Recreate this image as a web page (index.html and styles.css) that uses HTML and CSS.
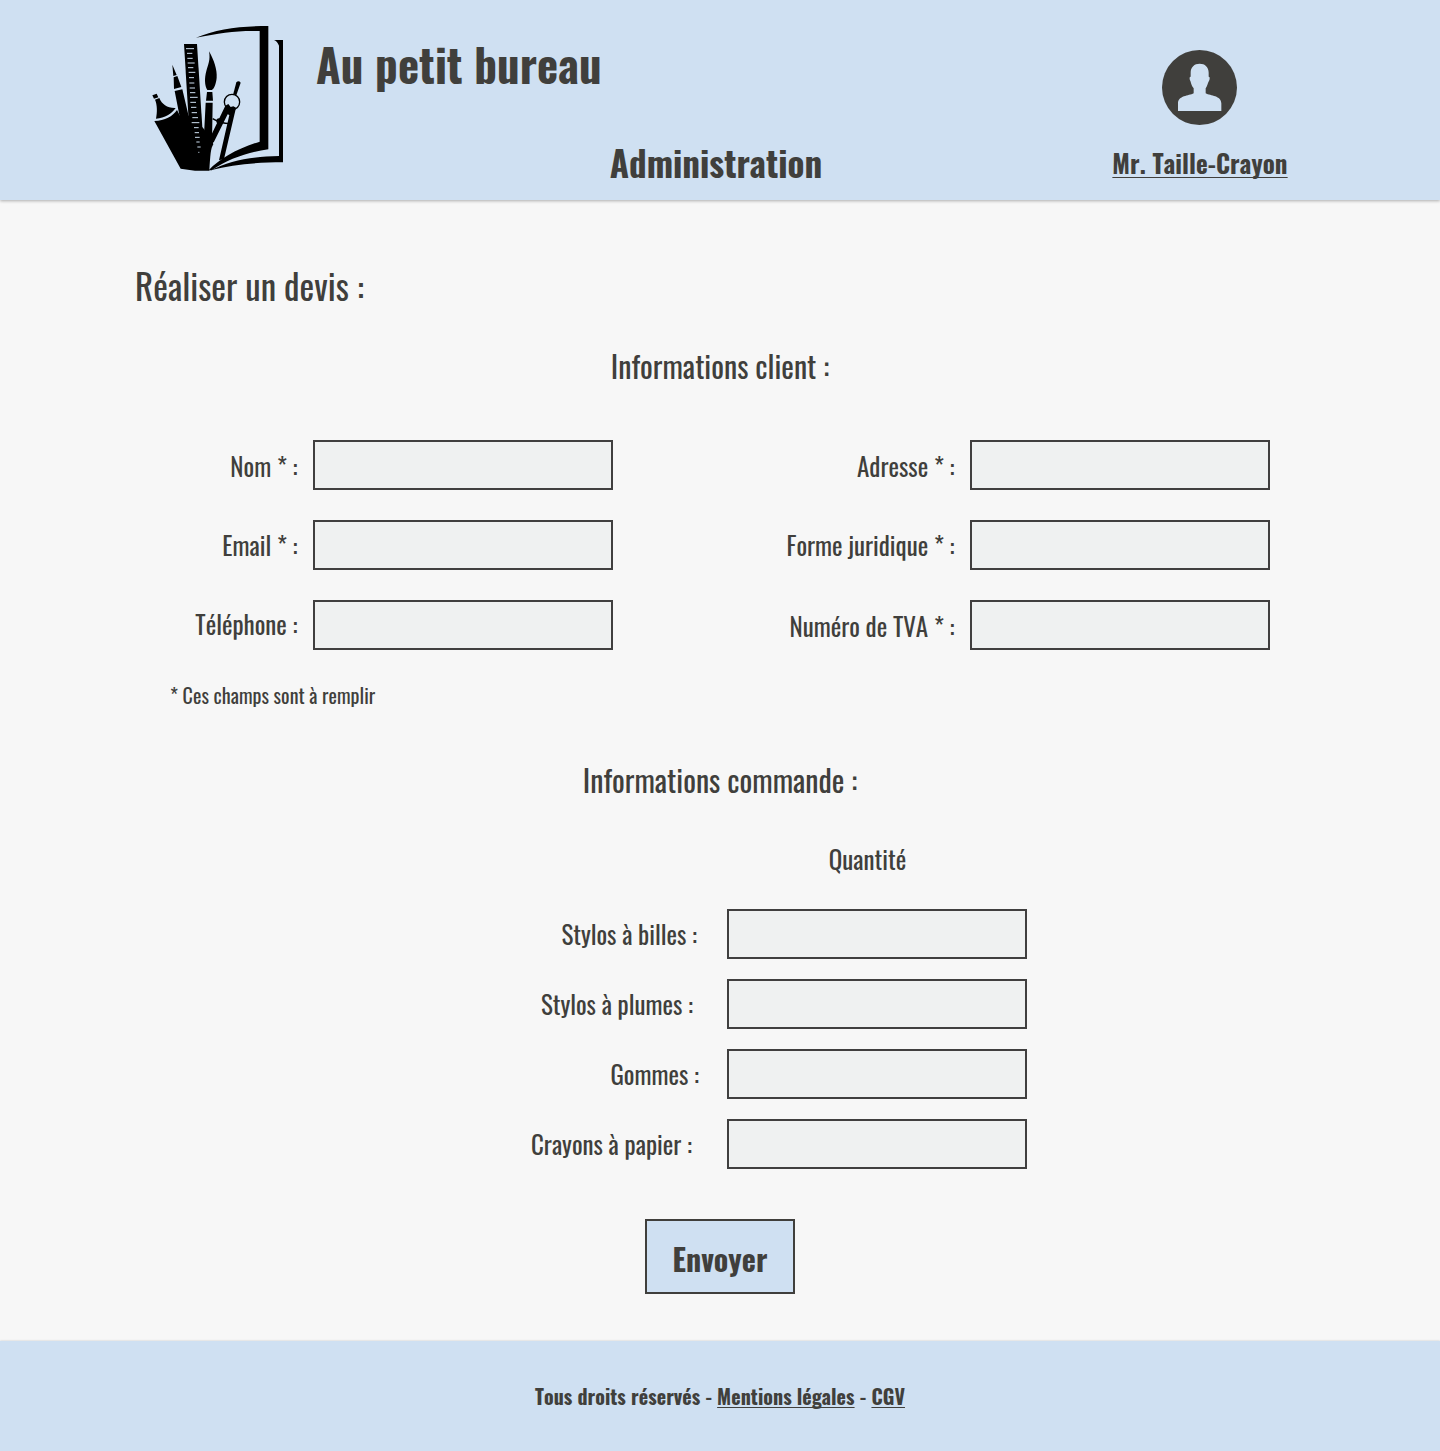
FILE: index.html
```html
<!DOCTYPE html>
<html lang="fr">
<head>
<meta charset="utf-8">
<title>Au petit bureau - Administration</title>
<link rel="stylesheet" href="styles.css">
</head>
<body>
<header class="header">
  <div class="brand">
    <svg class="logo" viewBox="0 0 480 495" aria-hidden="true">
      <!-- sketchbook -->
      <path d="M168 68C230 42 300 33 385 33V403C320 412 265 432 215 466L206 466C240 430 290 402 359 380V48C290 46 240 54 168 68Z"/>
      <path d="M402 75H429V442C350 442 280 448 212 466C270 436 340 424 417 423V92Q412 79 402 75Z"/>
      <!-- pencil -->
      <path d="M97 149L110 180L100 183ZM101 187L112 183L124 216L102 222ZM104 228L127 223L150 320L122 320Z"/>
      <!-- marker -->
      <path d="M37 241L50 236L55 247L42 251ZM45 254L58 249C66 268 82 280 107 279C95 296 75 309 48 311C52 292 52 270 45 254Z"/>
      <path d="M43 318C75 317 98 304 111 285L125 312L150 300L190 340L216 375L220 388C212 400 211 420 208 467H165L122 461Z"/>
      <!-- ruler -->
      <path d="M132 87H171L191 400L150 380Z"/>
      <path class="ticks" d="M138 101H162M141 115H157M142 130H158M143 144H164M144 158H160M146 172H166M147 188H162M148 204H163M149 219H165M150 233H166M150 247H173M151 262H168M153 277H169M155 293H171M157 308H174M155 323H178M162 338H176M164 353H177M165 367H179M169 381H179M172 396H182M175 412H178"/>
      <!-- brush -->
      <path d="M207 109C222 135 232 165 230 188C228 208 222 222 215 225H202C194 212 193 190 199 168C204 150 212 135 207 109ZM201 231H217L219 257H198ZM197 263H218L216 380L190 400Z"/>
      <!-- compass -->
      <path d="M289 202Q296 195 302 203L288 244H278Z"/>
      <circle class="ring" cx="276" cy="261" r="23"/>
      <path d="M256 272L265 267L272 276L280 274L288 278L252 432L237 436L268 300L263 298L222 380L208 395L211 366Z"/>
      <path class="bar" d="M218 311Q240 325 270 326"/>
      <circle cx="237" cy="318" r="8"/>
    </svg>
    <div class="brand-name">Au petit bureau</div>
  </div>
  <div class="section-name">Administration</div>
  <div class="user">
    <svg class="avatar" viewBox="0 0 225 225" aria-hidden="true">
      <circle cx="112.5" cy="112.5" r="112.5"/>
      <path d="M113 41C97 41 86 51 86 68V80C82 80 82 86 85 93C87 96 87 105 95 115V130C80 138 48 137 48 160V183H178V160C178 137 146 138 131 130V115C137 107 138 96 141 93C144 86 144 80 140 80V68C140 51 129 41 113 41Z"/>
    </svg>
    <a class="user-name" href="#">Mr. Taille-Crayon</a>
  </div>
</header>

<main>
  <h1 class="title">Réaliser un devis :</h1>
  <form>
    <h2 class="subtitle client">Informations client :</h2>
    <div class="client-fields">
      <label class="field low"><span>Nom * :</span><input type="text"></label>
      <label class="field low"><span>Adresse * :</span><input type="text"></label>
      <label class="field"><span>Email * :</span><input type="email"></label>
      <label class="field"><span>Forme juridique * :</span><input type="text"></label>
      <label class="field high"><span>Téléphone :</span><input type="tel"></label>
      <label class="field low"><span>Numéro de TVA * :</span><input type="text"></label>
    </div>
    <p class="note">* Ces champs sont à remplir</p>

    <h2 class="subtitle commande">Informations commande :</h2>
    <div class="quantity">Quantité</div>
    <div class="order-fields">
      <label class="field billes"><span>Stylos à billes :</span><input type="text"></label>
      <label class="field plumes"><span>Stylos à plumes :</span><input type="text"></label>
      <label class="field gommes"><span>Gommes :</span><input type="text"></label>
      <label class="field crayons"><span>Crayons à papier :</span><input type="text"></label>
    </div>
    <button class="send" type="submit">Envoyer</button>
  </form>
</main>

<footer class="footer">Tous droits réservés - <a href="#">Mentions légales</a> - <a href="#">CGV</a></footer>
</body>
</html>
```
FILE: styles.css
```css
:root {
  --ink: #403f3c;
  --sky: #cfe0f2;
}

* { box-sizing: border-box; }

body {
  margin: 0;
  background: #f7f7f7;
  color: var(--ink);
  font-family: Oswald, "Roboto Condensed", "Liberation Sans", sans-serif;
  font-weight: 400;
  font-kerning: none;
}

h1, h2, p { margin: 0; font-weight: 400; }

a {
  color: inherit;
  text-decoration: underline 1px;
  text-underline-offset: 2px;
  text-decoration-skip-ink: none;
}

/* header */
.header {
  display: grid;
  grid-template-columns: 592px 248px 1fr;
  height: 200px;
  background: var(--sky);
  box-shadow: 0 1px 3px rgba(0, 0, 0, .3);
  font-weight: 700;
}
.brand {
  display: flex;
  align-items: flex-start;
  padding: 15px 0 0 140px;
}
.logo { flex: none; width: 160px; height: 165px; }
.ticks { fill: none; stroke: var(--sky); stroke-width: 3; }
.ring, .bar { fill: none; stroke: #000; stroke-width: 4; }
.ring { fill: var(--sky); }
.brand-name {
  padding: 19px 0 0 16px;
  font-size: 45px;
  line-height: 60px;
  letter-spacing: .04px;
  white-space: nowrap;
}
.section-name {
  padding-top: 137px;
  font-size: 35px;
  line-height: 50px;
  text-align: center;
}
.user {
  display: flex;
  flex-direction: column;
  align-items: center;
  padding: 50px 0 0 119px;
}
.avatar { width: 75px; height: 75px; fill: var(--ink); }
.avatar path { fill: var(--sky); }
.user-name {
  margin: 18px 0 0 1px;
  font-size: 25px;
  line-height: 40px;
  letter-spacing: .1px;
  text-underline-offset: 3px;
}

/* headings */
.title {
  padding: 60px 0 0 135px;
  font-size: 35px;
  line-height: 50px;
}
.subtitle {
  font-size: 30px;
  line-height: 50px;
  text-align: center;
}
.client { margin-top: 31px; }
.commande { margin-top: 45px; }

/* fields */
.field {
  display: flex;
  justify-content: flex-end;
  gap: 15.5px;
  height: 50px;
  font-size: 25px;
  line-height: 50px;
}
.low span { padding-top: 1px; }
.high { line-height: 48px; }
.field input {
  flex: none;
  width: 300px;
  height: 50px;
  margin: 0;
  padding: 0 10px;
  border: 2px solid #403f3f;
  border-radius: 0;
  background: #eff1f1;
  font: inherit;
  color: inherit;
}
.client-fields {
  display: grid;
  grid-template-columns: 613px 657px;
  row-gap: 30px;
  margin-top: 49px;
}

.note {
  padding: 30px 0 0 170px;
  font-size: 20px;
  line-height: 30px;
  letter-spacing: .03px;
}

.quantity {
  margin-top: 29px;
  padding-left: 295px;
  font-size: 25px;
  line-height: 50px;
  text-align: center;
}
.order-fields {
  display: grid;
  grid-template-columns: 1027px;
  row-gap: 20px;
  margin-top: 25px;
}
.billes { gap: 30px; }
.plumes { gap: 34px; }
.gommes { gap: 28px; }
.crayons { gap: 35px; }

.send {
  display: block;
  width: 150px;
  height: 75px;
  margin: 50px auto 0;
  padding: 5px 0 0;
  border: 2px solid #403f3c;
  border-radius: 0;
  background: var(--sky);
  color: inherit;
  font: 700 30px/40px Oswald, "Roboto Condensed", sans-serif;
}

/* footer */
.footer {
  height: 110px;
  margin-top: 47px;
  padding-top: 40px;
  background: var(--sky);
  box-shadow: 0 0 2px rgba(0, 0, 0, .2);
  font-size: 20px;
  font-weight: 700;
  line-height: 30px;
  letter-spacing: .04px;
  text-align: center;
}
```
